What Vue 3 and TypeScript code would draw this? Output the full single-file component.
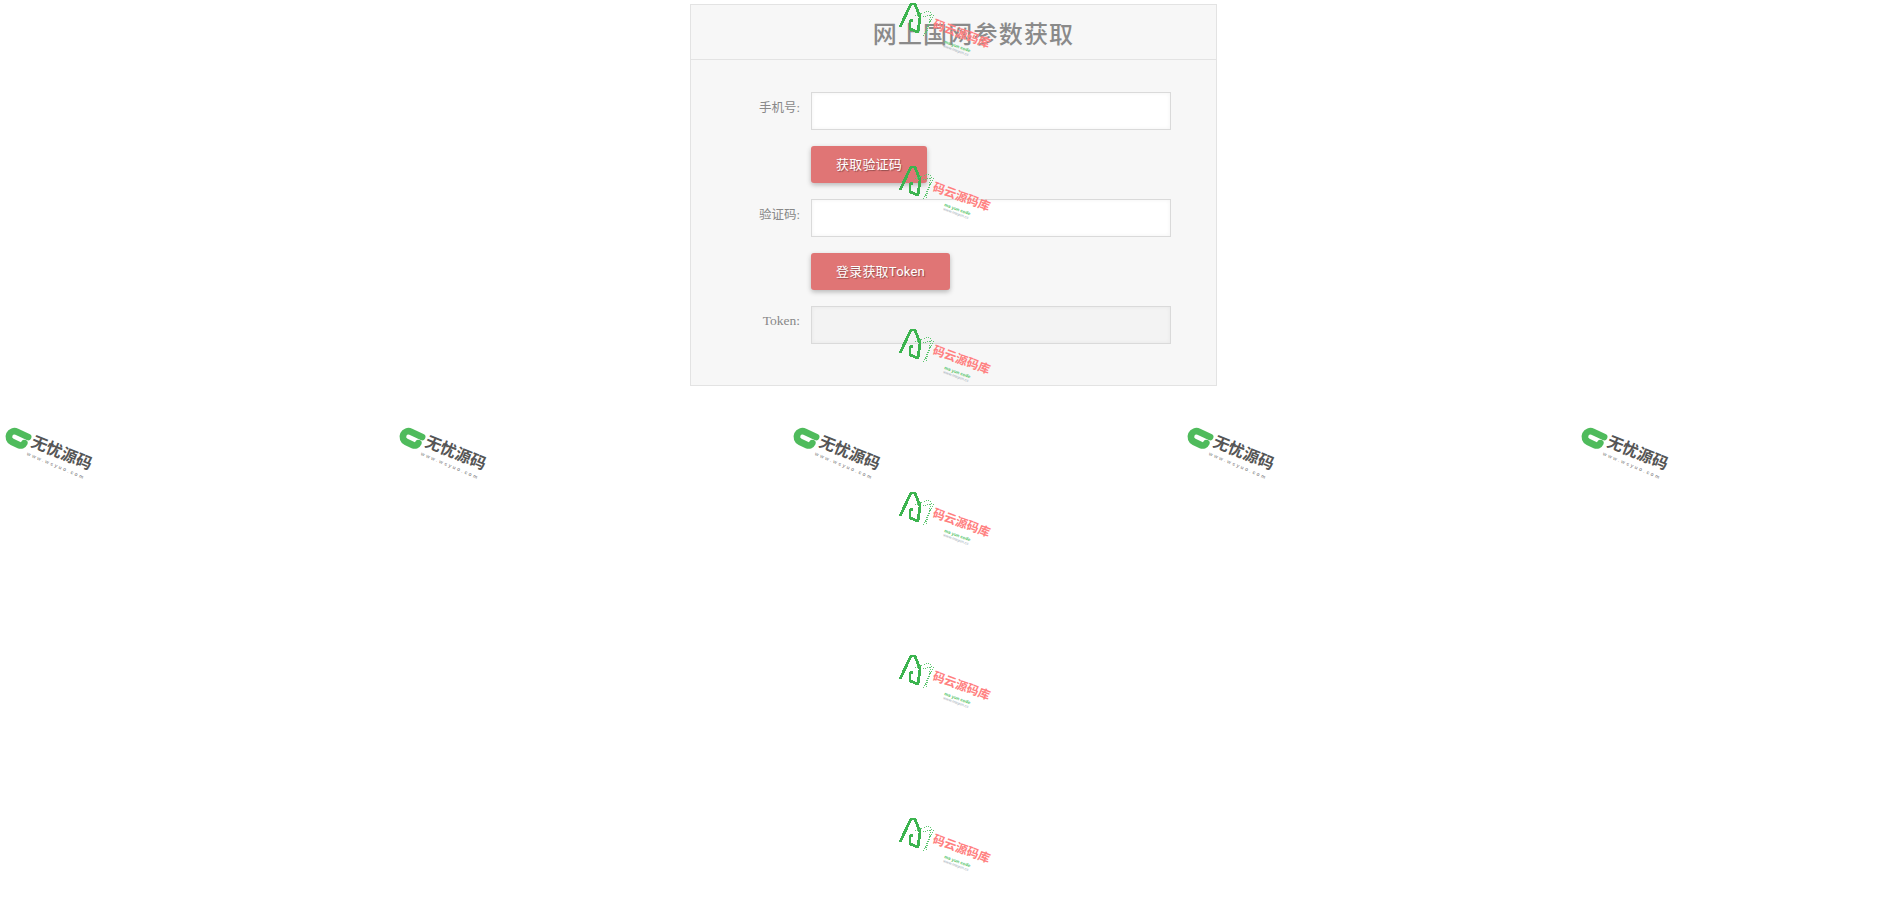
<script setup lang="ts">
const fields = [
  { label: '手机号:', button: '获取验证码', disabled: false },
  { label: '验证码:', button: '登录获取Token', disabled: false },
  { label: 'Token:', button: '', disabled: true },
]
const grayMarks = [0, 1, 2, 3, 4].map((i) => i * 394)
const redMarks = [0, 1, 2, 3, 4, 5].map((i) => -8 + i * 163)
</script>

<template>
  <div class="page">
    <section class="card">
      <header class="card-head">
        <h1>网上国网参数获取</h1>
      </header>
      <form class="form" @submit.prevent>
        <template v-for="f in fields" :key="f.label">
          <label class="label" :class="{ latin: f.disabled }">{{ f.label }}</label>
          <input class="input" :disabled="f.disabled" type="text" />
          <template v-if="f.button">
            <span></span>
            <div><button class="btn" type="button">{{ f.button }}</button></div>
          </template>
        </template>
      </form>
    </section>

    <div class="overlay" aria-hidden="true">
      <svg
        v-for="x in grayMarks"
        :key="x"
        class="mark gray"
        :style="{ left: x + 'px', top: '410px' }"
        width="110"
        height="80"
        viewBox="0 0 110 80"
      >
        <g transform="translate(1 2) rotate(25 16 26) translate(16 26) scale(1.6) translate(-16 -26)">
          <path class="g-logo" d="M22 22.5H14.25a3.5 3.5 0 0 0 0 7H19a2.5 2.5 0 0 0 2.5-2.5" />
        </g>
        <text class="g-name" x="30" y="36" transform="rotate(22 30 36)">无忧源码</text>
        <text class="g-url" x="26.5" y="45" transform="rotate(23 26.5 45)">www.wsyuo.com</text>
      </svg>

      <svg
        v-for="y in redMarks"
        :key="y"
        class="mark red"
        :style="{ left: '890px', top: y + 'px' }"
        width="110"
        height="70"
        viewBox="0 0 110 70"
      >
        <path class="r-logo" d="M10 35L21 12H25L30 25L28 40L20 37L20 29L23 28" />
        <path class="r-dots" d="M25 24L38 19L44 22L33 45" />
        <path class="r-dots" d="M33 25L41 23L36 43" />
        <text class="r-name" x="42" y="35.5" transform="rotate(20 42 35.5)">码云源码库</text>
        <text class="r-sub" x="54" y="51" transform="rotate(20 54 51)">ma yun code</text>
        <text class="r-url" x="53" y="55" transform="rotate(20 53 55)">www.mayun.cc</text>
      </svg>
    </div>
  </div>
</template>

<style>
html,
body {
  margin: 0;
  background: #fff;
}
</style>

<style scoped>
.page {
  position: relative;
  height: 899px;
  overflow: hidden;
  padding: 4px 0 0 690px;
  box-sizing: border-box;
  font-family: "Liberation Serif", "Noto Sans CJK SC", serif;
}

.card {
  width: 527px;
  background: #f7f7f7;
  border: 1px solid #e3e3e3;
  box-sizing: border-box;
}

.card-head {
  height: 55px;
  display: flex;
  align-items: center;
  justify-content: center;
  padding: 1px 0 0 40px;
  box-sizing: border-box;
  border-bottom: 1px solid #e3e3e3;
}

h1 {
  margin: 0;
  font-size: 24px;
  line-height: 30px;
  letter-spacing: 1.2px;
  font-weight: 500;
  color: #8a8a8a;
  font-family: "Noto Sans CJK SC", sans-serif;
}

.form {
  display: grid;
  grid-template-columns: 109px 360px;
  column-gap: 11px;
  row-gap: 16px;
  padding: 32px 0 41px;
}

.label {
  padding-top: 7px;
  line-height: 18px;
  text-align: right;
  font-size: 12.5px;
  color: #888;
}

.label.latin {
  padding-top: 6px;
  font-size: 13.5px;
}

.input {
  height: 38px;
  width: 100%;
  box-sizing: border-box;
  border: 1px solid #dadada;
  box-shadow: inset 0 0 4px rgba(0, 0, 0, 0.05);
  background: #fff;
  outline: none;
  padding: 0 8px;
}

.input:disabled {
  background: #f3f3f3;
}

.btn {
  height: 37px;
  padding: 0 25px 2px;
  border: none;
  border-radius: 3px;
  background: #e07575;
  color: #fff;
  font-size: 13px;
  letter-spacing: 0.2px;
  font-family: Roboto, "Noto Sans CJK SC", sans-serif;
  text-shadow: 1px 1px 1px rgba(0, 0, 0, 0.35);
  box-shadow: 0 2px 5px rgba(0, 0, 0, 0.26);
  display: block;
}

.overlay {
  position: absolute;
  inset: 0;
  pointer-events: none;
}

.mark {
  position: absolute;
  overflow: visible;
}

.g-logo {
  fill: none;
  stroke: #4fbb5c;
  stroke-width: 4.2;
  stroke-linecap: round;
  stroke-linejoin: round;
}

.g-name {
  font-family: "Noto Sans CJK SC", sans-serif;
  font-size: 16px;
  font-weight: 700;
  fill: #555;
}

.g-url {
  font-family: "Liberation Sans", sans-serif;
  font-size: 5px;
  letter-spacing: 2px;
  fill: #666;
}

.r-logo {
  fill: none;
  stroke: #3cb44f;
  stroke-width: 2.8;
  stroke-linejoin: round;
  shape-rendering: crispEdges;
}

.r-dots {
  fill: none;
  stroke: #5cc66f;
  stroke-width: 1;
  stroke-dasharray: 1 1;
  shape-rendering: crispEdges;
}

.r-name {
  font-family: "Noto Sans CJK SC", sans-serif;
  font-size: 12px;
  font-weight: 700;
  fill: #ff8080;
}

.r-sub {
  font-family: "Liberation Sans", sans-serif;
  font-size: 4.5px;
  font-weight: 700;
  fill: #55c56a;
}

.r-url {
  font-family: "Liberation Sans", sans-serif;
  font-size: 4px;
  fill: #9aa8b5;
}
</style>
